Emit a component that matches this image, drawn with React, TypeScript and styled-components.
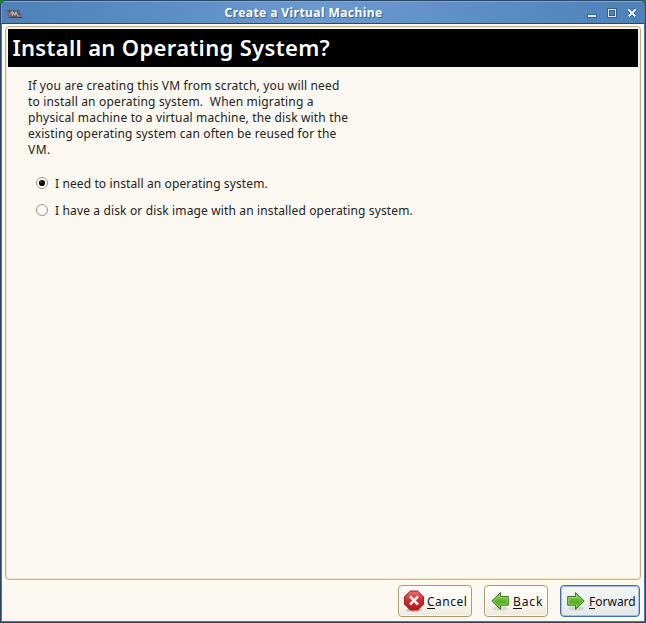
import React from 'react';
import styled, { createGlobalStyle } from 'styled-components';

const Global = createGlobalStyle`
  * { box-sizing: border-box; }
  body { margin: 0; background: #168030; font-family: "Noto Sans", "Open Sans", sans-serif; overflow: hidden; }
`;

const Window = styled.div`
  width: 646px;
  height: 623px;
  display: flex;
  flex-direction: column;
  border: 1px solid #2c4766;
  border-radius: 6px 6px 0 0;
  overflow: hidden;
  background: #4477ac;
`;

const TitleBar = styled.header`
  height: 23px;
  flex: none;
  display: grid;
  grid-template-columns: 20px 1fr 60px;
  align-items: center;
  border-top: 1px solid #7da7d4;
  border-left: 1px solid #6b9acb;
  border-bottom: 1px solid #2c4766;
  background: linear-gradient(90deg, #4e81b8, #6b9ace 50%, #4e81b8);
`;

const WindowTitle = styled.div`
  justify-self: center;
  color: #fff;
  font-size: 12px;
  font-weight: 700;
  line-height: 20px;
  letter-spacing: 0.43px;
  white-space: nowrap;
  text-shadow: 1px 1px 0 #3b648f;
`;

const AppIcon = styled.svg`
  width: 16px;
  height: 10px;
  margin: 2px 0 0 4px;
`;

const Controls = styled.svg`
  width: 60px;
  height: 21px;
`;

const Body = styled.main`
  flex: 1;
  margin: 0 1px 1px;
  display: flex;
  flex-direction: column;
  background: #fbf8f1;
`;

const Panel = styled.section`
  height: 554px;
  margin: 2px 3px 0;
  border: 1px solid #c5b282;
  border-radius: 4px;
  box-shadow: inset 0 0 0 1px #f1e9d3;
  padding: 2px;
`;

const Heading = styled.h1`
  height: 38px;
  margin: 0;
  padding-left: 4.5px;
  background: #000;
  color: #fff;
  font-size: 22px;
  font-weight: 600;
  line-height: 37px;
  letter-spacing: 0.33px;
  white-space: nowrap;
`;

const Intro = styled.div`
  margin: 11px 0 0 20px;
`;

const Line = styled.div<{ $spacing: number }>`
  height: 16px;
  color: #222;
  font-size: 12px;
  line-height: 16px;
  letter-spacing: ${p => p.$spacing}px;
  white-space: pre;
`;

const Options = styled.div`
  display: flex;
  flex-direction: column;
  gap: 11px;
  margin: 18px 0 0 28px;
`;

const Option = styled.label`
  display: flex;
  align-items: center;
  gap: 7px;
  height: 16px;
`;

const Radio = styled.svg`
  width: 12px;
  height: 12px;
  flex: none;
  margin-bottom: 2px;
`;

const Footer = styled.footer`
  display: flex;
  justify-content: flex-end;
  gap: 12px;
  padding: 5px 4px 0 0;
`;

const Button = styled.button<{ $width: number; $focus?: boolean }>`
  width: ${p => p.$width}px;
  height: 32px;
  display: flex;
  align-items: center;
  gap: 3px;
  padding: 0 0 0 5px;
  border: 1px solid ${p => (p.$focus ? '#476d97' : '#ab9a6b')};
  border-radius: 4px;
  box-shadow: inset 0 0 0 1px ${p => (p.$focus ? '#a8bfd7' : '#fffdf9')};
  background: ${p => (p.$focus ? 'linear-gradient(#f3f6f8, #e5e8e9)' : 'linear-gradient(#fff, #fbf8f2 55%, #eee9dc)')};
  color: #111;
  font: 12px/16px "Noto Sans", sans-serif;
  white-space: nowrap;
`;

const ButtonIcon = styled.svg`
  width: 20px;
  height: 22px;
  flex: none;
`;

const Label = styled.span<{ $spacing: number }>`
  padding-top: 2px;
  letter-spacing: ${p => p.$spacing}px;
`;

const Key = styled.span`
  display: inline-block;
  height: 15px;
  border-bottom: 1px solid #111;
`;

const intro = [
  { text: 'If you are creating this VM from scratch, you will need', spacing: 0.17 },
  { text: 'to install an operating system.  When migrating a', spacing: 0.17 },
  { text: 'physical machine to a virtual machine, the disk with the', spacing: 0.155 },
  { text: 'existing operating system can often be reused for the', spacing: 0.13 },
  { text: 'VM.', spacing: 0.5 },
];

const RadioMark = ({ checked = false }: { checked?: boolean }) => (
  <Radio viewBox="0 0 12 12" role="radio" aria-checked={checked}>
    <circle cx="6" cy="6" r="5.5" fill="#fff" stroke="#a48f6c" />
    {checked && <circle cx="6" cy="6" r="3.1" fill="#080808" />}
    {checked && <circle cx="5" cy="5" r="0.8" fill="#656565" />}
  </Radio>
);

const Arrow = ({ forward = false }: { forward?: boolean }) => (
  <ButtonIcon viewBox="0 0 20 22">
    <defs>
      <linearGradient id={forward ? 'fwd' : 'bck'} x1="0" y1="0" x2="0" y2="1">
        <stop offset="0" stopColor="#92cf62" />
        <stop offset=".5" stopColor="#61b52c" />
        <stop offset="1" stopColor="#3d9713" />
      </linearGradient>
    </defs>
    <ellipse cx="10" cy="18.5" rx="8" ry="2" fill="#8c8c7e" opacity=".25" />
    <g transform={forward ? 'translate(20 0) scale(-1 1)' : undefined}>
      <path d="M1.8 11 10.5 2.6V6.5H18.3V15.2H10.5V19.4Z" fill={`url(#${forward ? 'fwd' : 'bck'})`} stroke="#39780f" strokeLinejoin="round" />
      <path d="M3.4 11 9.5 5V7.5H17.3V14.2H9.5V17Z" fill="none" stroke="#a9dc81" strokeWidth=".9" opacity=".8" />
    </g>
  </ButtonIcon>
);

export default function App() {
  return (
    <>
      <Global />
      <Window>
        <TitleBar>
          <AppIcon viewBox="0 0 16 10">
            <path d="M0 1H13L16 9H3Z" fill="#55585f" />
            <path d="m1 2 3 5 1.5-4M6.5 7V3L9 6l1-3 2 4h2" fill="none" stroke="#b4b4b4" strokeWidth="1.2" />
            <path d="m1 1.5 2 3.5M5 5 3.5 7" stroke="#8d5261" strokeWidth="1.5" />
            <path d="M3 8.5h13" stroke="#3c4046" />
          </AppIcon>
          <WindowTitle>Create a Virtual Machine</WindowTitle>
          <Controls viewBox="0 0 60 21" shapeRendering="crispEdges">
            <rect x="2.5" y="12.5" width="9" height="3" fill="#e0eaf5" stroke="#385f8b" />
            <path d="M23.5 7.5h7v7h-7z" fill="none" stroke="#385f8b" strokeWidth="3" />
            <path d="M23.5 7.5h7v7h-7z" fill="none" stroke="#dce8f4" />
            <path d="m43.5 7.5 7 7m0-7-7 7" fill="none" stroke="#385f8b" strokeWidth="4" />
            <path d="m43.5 7.5 7 7m0-7-7 7" fill="none" stroke="#e0eaf5" strokeWidth="2" />
          </Controls>
        </TitleBar>
        <Body>
          <Panel>
            <Heading>Install an Operating System?</Heading>
            <Intro>
              {intro.map(line => <Line key={line.text} $spacing={line.spacing}>{line.text}</Line>)}
            </Intro>
            <Options>
              <Option><RadioMark checked /><Line $spacing={0.11}>I need to install an operating system.</Line></Option>
              <Option><RadioMark /><Line $spacing={0.14}>I have a disk or disk image with an installed operating system.</Line></Option>
            </Options>
          </Panel>
          <Footer>
            <Button $width={74}>
              <ButtonIcon viewBox="0 0 20 22">
                <defs>
                  <linearGradient id="stop" x1="0" y1="0" x2="0" y2="1">
                    <stop offset="0" stopColor="#e77173" />
                    <stop offset=".5" stopColor="#cf292f" />
                    <stop offset="1" stopColor="#b5161d" />
                  </linearGradient>
                </defs>
                <ellipse cx="10" cy="20" rx="8" ry="1.8" fill="#777" opacity=".4" />
                <path d="M6.3 1h7.4l5.8 5.8v7.4L13.7 20H6.3L.5 14.2V6.8Z" fill="url(#stop)" stroke="#a61a20" />
                <path d="m6 6.5 8 8m0-8-8 8" stroke="#f7eeee" strokeWidth="2.5" />
              </ButtonIcon>
              <Label $spacing={0.5}><Key>C</Key>ancel</Label>
            </Button>
            <Button $width={64}><Arrow /><Label $spacing={0.9}><Key>B</Key>ack</Label></Button>
            <Button $width={80} $focus><Arrow forward /><Label $spacing={0}><Key>F</Key>orward</Label></Button>
          </Footer>
        </Body>
      </Window>
    </>
  );
}
